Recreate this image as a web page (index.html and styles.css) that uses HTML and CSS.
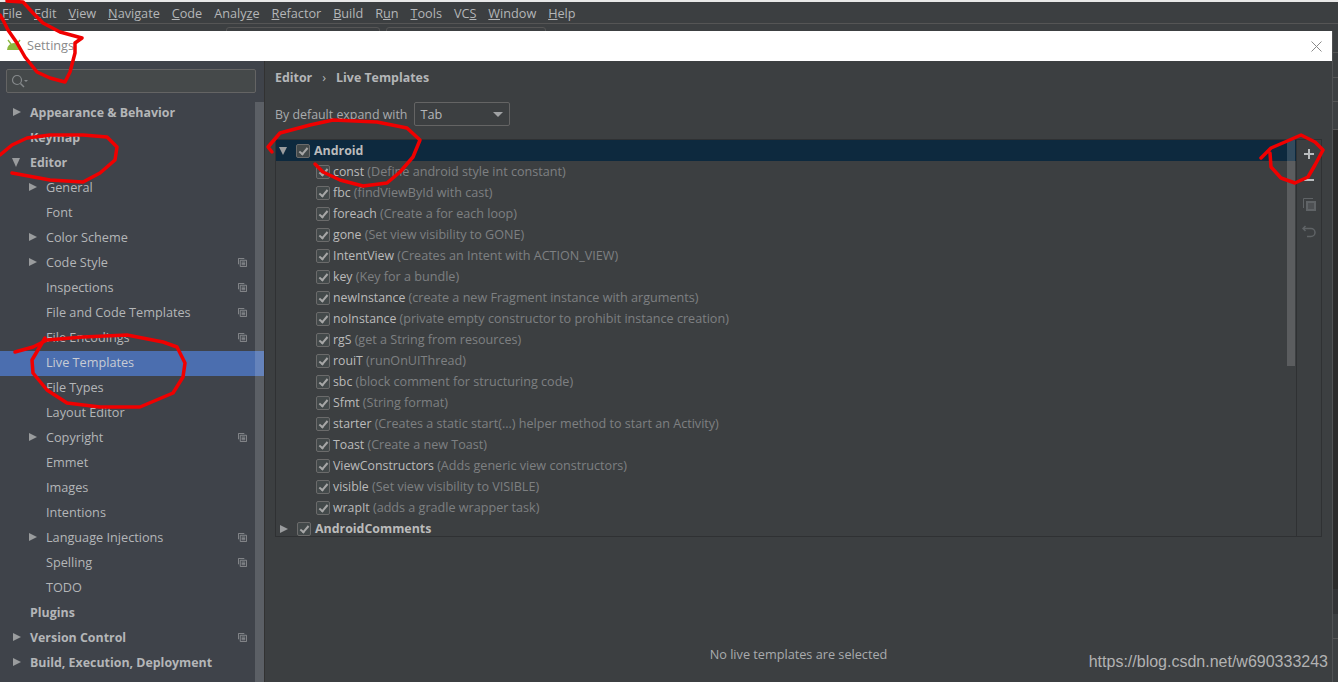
FILE: index.html
```html
<!DOCTYPE html>
<html lang="en">
<head>
    <meta charset="UTF-8">
    <title>Settings</title>
    <link rel="stylesheet" href="styles.css">
</head>
<body>

<svg width="0" height="0" class="defs">
    <symbol id="copy" viewBox="0 0 10 10">
        <path d="M.5 7V.5H7M2.500 2.500h7v7h-7zM4 4.500h4M4 6h4M4 7.500h4" fill="none" stroke="currentColor"/>
    </symbol>
</svg>

<div class="menubar">
    <span><u>F</u>ile</span>
    <span><u>E</u>dit</span>
    <span><u>V</u>iew</span>
    <span><u>N</u>avigate</span>
    <span><u>C</u>ode</span>
    <span>Analy<u>z</u>e</span>
    <span><u>R</u>efactor</span>
    <span><u>B</u>uild</span>
    <span>R<u>u</u>n</span>
    <span><u>T</u>ools</span>
    <span>VC<u>S</u></span>
    <span><u>W</u>indow</span>
    <span><u>H</u>elp</span>
</div>
<div class="toolbar">
    <div class="tool-box first"></div>
    <div class="tool-box second"></div>
</div>

<div class="main">
    <div class="dialog">
        <div class="titlebar">
            <svg class="droid" width="16" height="12" viewBox="0 0 16 12">
                <path d="M1 11a7 7 0 0 1 14 0z" fill="#8cb73f"/>
                <path d="M2 1l3 4M14 1l-3 4" stroke="#8cb73f" stroke-width="1.300"/>
            </svg>
            <span class="title">Settings</span>
            <svg class="close" width="11" height="11" viewBox="0 0 11 11">
                <path d="M.5.500l10 10M10.500.500l-10 10" stroke="#8a8a8a"/>
            </svg>
        </div>
        <div class="dialog-body">
            <div class="sidebar">
                <div class="search">
                    <svg width="18" height="14" viewBox="0 0 18 14">
                        <circle cx="6" cy="6" r="4.500" fill="none" stroke="#85898b" stroke-width="1.200"/>
                        <path d="M9.500 9.500l3.500 3.500" stroke="#85898b" stroke-width="1.400"/>
                        <path d="M13 6h4l-2 2z" fill="#85898b"/>
                    </svg>
                </div>
                <div class="tree">
                    <div class="nav bold arrow">Appearance &amp; Behavior</div>
                    <div class="nav bold">Keymap</div>
                    <div class="nav bold arrow open">Editor</div>
                    <div class="nav sub arrow">General</div>
                    <div class="nav sub">Font</div>
                    <div class="nav sub arrow">Color Scheme</div>
                    <div class="nav sub arrow">Code Style<svg class="mark"><use href="#copy"/></svg></div>
                    <div class="nav sub">Inspections<svg class="mark"><use href="#copy"/></svg></div>
                    <div class="nav sub">File and Code Templates<svg class="mark"><use href="#copy"/></svg></div>
                    <div class="nav sub">File Encodings<svg class="mark"><use href="#copy"/></svg></div>
                    <div class="nav sub active">Live Templates</div>
                    <div class="nav sub">File Types</div>
                    <div class="nav sub">Layout Editor</div>
                    <div class="nav sub arrow">Copyright<svg class="mark"><use href="#copy"/></svg></div>
                    <div class="nav sub">Emmet</div>
                    <div class="nav sub">Images</div>
                    <div class="nav sub">Intentions</div>
                    <div class="nav sub arrow">Language Injections<svg class="mark"><use href="#copy"/></svg></div>
                    <div class="nav sub">Spelling<svg class="mark"><use href="#copy"/></svg></div>
                    <div class="nav sub">TODO</div>
                    <div class="nav bold">Plugins</div>
                    <div class="nav bold arrow">Version Control<svg class="mark"><use href="#copy"/></svg></div>
                    <div class="nav bold arrow">Build, Execution, Deployment</div>
                </div>
                <div class="side-scroll"></div>
            </div>

            <div class="content">
                <div class="crumbs"><b>Editor</b><i>›</i><b>Live Templates</b></div>
                <div class="expand">
                    <span>By default expand with</span>
                    <div class="select">Tab<em></em></div>
                </div>
                <div class="panel">
                    <div class="list">
                        <div class="group selected"><em class="tri open"></em><span class="check"></span><b>Android</b></div>
                        <div class="row"><span class="check"></span>const <small>(Define android style int constant)</small></div>
                        <div class="row"><span class="check"></span>fbc <small>(findViewById with cast)</small></div>
                        <div class="row"><span class="check"></span>foreach <small>(Create a for each loop)</small></div>
                        <div class="row"><span class="check"></span>gone <small>(Set view visibility to GONE)</small></div>
                        <div class="row"><span class="check"></span>IntentView <small>(Creates an Intent with ACTION_VIEW)</small></div>
                        <div class="row"><span class="check"></span>key <small>(Key for a bundle)</small></div>
                        <div class="row"><span class="check"></span>newInstance <small>(create a new Fragment instance with arguments)</small></div>
                        <div class="row"><span class="check"></span>noInstance <small>(private empty constructor to prohibit instance creation)</small></div>
                        <div class="row"><span class="check"></span>rgS <small>(get a String from resources)</small></div>
                        <div class="row"><span class="check"></span>rouiT <small>(runOnUIThread)</small></div>
                        <div class="row"><span class="check"></span>sbc <small>(block comment for structuring code)</small></div>
                        <div class="row"><span class="check"></span>Sfmt <small>(String format)</small></div>
                        <div class="row"><span class="check"></span>starter <small>(Creates a static start(...) helper method to start an Activity)</small></div>
                        <div class="row"><span class="check"></span>Toast <small>(Create a new Toast)</small></div>
                        <div class="row"><span class="check"></span>ViewConstructors <small>(Adds generic view constructors)</small></div>
                        <div class="row"><span class="check"></span>visible <small>(Set view visibility to VISIBLE)</small></div>
                        <div class="row"><span class="check"></span>wrapIt <small>(adds a gradle wrapper task)</small></div>
                        <div class="group"><em class="tri"></em><span class="check"></span><b>AndroidComments</b></div>
                    </div>
                    <div class="list-scroll"></div>
                    <div class="actions">
                        <svg width="12" height="12" viewBox="0 0 12 12"><path d="M6 1v10M1 6h10" stroke="#b9bcbe" stroke-width="2"/></svg>
                        <svg width="12" height="12" viewBox="0 0 12 12"><path d="M1 6h10" stroke="#b9bcbe" stroke-width="2"/></svg>
                        <svg class="copy-btn" width="13" height="13" viewBox="0 0 13 13"><path d="M.5 10V.5H10" fill="none" stroke="#5f6366"/><path d="M3 3h10v10H3z" fill="#5f6366"/><path d="M5 6h6M5 8h6M5 10h6" stroke="#3c3f41"/></svg>
                        <svg width="14" height="13" viewBox="0 0 14 13"><path d="M3.500 1L1 3.500 3.500 6M1.500 3.500H9a4 4 0 0 1 0 8H5" fill="none" stroke="#5f6366" stroke-width="1.500"/></svg>
                    </div>
                </div>
                <div class="empty">No live templates are selected</div>
            </div>
        </div>
    </div>
    <div class="ide-edge">
        <div class="edge-line"></div>
        <div class="edge-line"></div>
        <div class="edge-line"></div>
        <div class="edge-line"></div>
        <div class="edge-dark"></div>
        <div class="edge-mid"></div>
        <div class="edge-line"></div>
        <div></div>
    </div>
</div>

<div class="watermark">https://blog.csdn.net/w690333243</div>

<svg class="scribbles" width="1338" height="682" viewBox="0 0 1338 682">
    <g fill="none" stroke="#f00000" stroke-width="3.500" stroke-linecap="round" stroke-linejoin="round">
        <path d="M7 1L23 2L33 13L43 23L60 32L82 38L75 43L75 53L70 72L65 82L50 78L37 72L25 57L17 43L8 30L3 20L0 15"/>
        <path d="M0 155L12 145L27 138L50 135L83 135L107 137L117 147L115 160L100 173L83 182L50 180L12 173"/>
        <path d="M272 152L268 147L280 133L310 125L333 120L377 122L407 128L420 140L413 157L400 172L387 183L363 186L340 180L323 172L315 164"/>
        <path d="M15 352L33 347L47 340L83 337L127 335L163 342L177 347L185 363L183 377L173 393L140 407L100 407L67 403L47 390L33 373L32 360L45 338"/>
        <path d="M1261 158L1271 148L1285 142L1301 135L1315 142L1323 150L1315 165L1308 177L1295 183L1281 178L1271 167L1270 153"/>
    </g>
</svg>

</body>
</html>
```

FILE: styles.css
```css
html, body {
    margin: 0;
    height: 682px;
    overflow: hidden;
}
body {
    font-family: 'Open Sans', sans-serif;
    font-size: 12.7px;
    background: #3c3f41;
    color: #bbbbbb;
    display: flex;
    flex-direction: column;
    position: relative;
}
b, .nav.bold {
    font-size: 12.4px;
    font-weight: 700;
}
.defs {
    position: absolute;
}
.menubar {
    height: 21px;
    display: flex;
    align-items: center;
    gap: 11.9px;
    padding-left: 2px;
    border-top: 2px solid #e8e8e8;
    border-bottom: 1px solid #555555;
    color: #b4b6b8;
}
.toolbar {
    height: 7px;
    display: flex;
    overflow: hidden;
}
.tool-box {
    height: 12px;
    border: 1px solid #555555;
    border-radius: 3px;
    margin-top: 3px;
    box-sizing: border-box;
}
.tool-box.first {
    width: 154px;
    margin-left: 226px;
}
.tool-box.second {
    width: 160px;
    margin-left: 6px;
}
.main {
    flex: 1;
    display: flex;
    min-height: 0;
}
.dialog {
    width: 1332px;
    display: flex;
    flex-direction: column;
}
.ide-edge {
    flex: 1;
    display: grid;
    grid-template-rows: 22px 25px 24px 28px 459px 25px 25px 1fr;
    border-left: 1px solid #505254;
}
.edge-line {
    border-bottom: 1px solid #555555;
}
.edge-dark {
    background: #2b2b2b;
}
.edge-mid {
    background: #323436;
}
.titlebar {
    height: 30px;
    flex: none;
    background: #ffffff;
    display: flex;
    align-items: center;
    padding: 0 10px 0 6px;
}
.droid {
    margin-top: -2px;
}
.title {
    margin-left: 5px;
    margin-top: -2px;
    color: #8a8a8a;
    flex: 1;
}
.dialog-body {
    flex: 1;
    display: flex;
    min-height: 0;
}

/* left tree */
.sidebar {
    width: 264px;
    flex: none;
    background: #3f434a;
    border-right: 1px solid #323232;
    position: relative;
}
.search {
    height: 22px;
    margin: 8px 8px 0 6px;
    border: 1px solid #646464;
    border-radius: 2px;
    background: #45494a;
    display: flex;
    align-items: center;
    padding-left: 4px;
}
.tree {
    margin-top: 8px;
}
.nav {
    height: 25px;
    box-sizing: border-box;
    padding: 0 0 2px 30px;
    color: #b4b6b8;
    display: flex;
    align-items: center;
    position: relative;
}
.nav.sub {
    padding: 0 0 4px 46px;
}
.nav.active {
    background: #4b6eaf;
    color: #c8ccd4;
}
.nav.arrow::before {
    content: "";
    position: absolute;
    left: 13px;
    top: 7px;
    border-left: 8px solid #9a9c9e;
    border-top: 4.500px solid transparent;
    border-bottom: 4.500px solid transparent;
}
.nav.sub.arrow::before {
    left: 29px;
}
.nav.open::before {
    left: 12px;
    top: 7px;
    border-top: 9px solid #9a9c9e;
    border-left: 4.500px solid transparent;
    border-right: 4.500px solid transparent;
    border-bottom: 0;
}
.mark {
    width: 9px;
    height: 9px;
    position: absolute;
    left: 238px;
    top: 7px;
    color: #8d9093;
}
.side-scroll {
    position: absolute;
    left: 255px;
    top: 41px;
    bottom: 0;
    width: 9px;
    background: rgba(255, 255, 255, 0.15);
}

/* right side */
.content {
    flex: 1;
    min-width: 0;
    padding: 0 10px;
    position: relative;
}
.crumbs {
    height: 32px;
    display: flex;
    align-items: center;
    color: #b4b6b8;
}
.crumbs i {
    font-style: normal;
    margin: 0 10px;
}
.expand {
    display: flex;
    align-items: center;
    gap: 7px;
    margin-top: 9px;
    color: #a9abad;
}
.expand span {
    font-size: 12.4px;
}
.select {
    width: 96px;
    height: 24px;
    line-height: 22px;
    box-sizing: border-box;
    border: 1px solid #646464;
    border-radius: 2px;
    padding-left: 5px;
    color: #b4b6b8;
    position: relative;
}
.select em {
    position: absolute;
    right: 6px;
    top: 9px;
    border-top: 5px solid #a0a2a4;
    border-left: 5px solid transparent;
    border-right: 5px solid transparent;
}
.panel {
    height: 398px;
    margin-top: 13px;
    box-sizing: border-box;
    border: 1px solid #2f3133;
    display: flex;
    position: relative;
    overflow: hidden;
}
.list {
    flex: 1;
    min-width: 0;
}
.group, .row {
    height: 21px;
    line-height: 16px;
    display: flex;
    align-items: center;
    white-space: pre;
    color: #bbbbbb;
}
.group {
    padding-left: 3px;
}
.group.selected {
    background: #0d293e;
}
.row {
    box-sizing: border-box;
    padding: 0 0 0 40px;
    font-size: 12.3px;
}
.row small {
    font-size: 12.6px;
    color: #7e8082;
}
.tri {
    width: 0;
    margin-left: 1px;
    margin-right: 9px;
    border-left: 8px solid #9a9c9e;
    border-top: 4.500px solid transparent;
    border-bottom: 4.500px solid transparent;
}
.tri.open {
    margin-left: 0;
    border-top: 8px solid #9a9c9e;
    border-left: 4.500px solid transparent;
    border-right: 4.500px solid transparent;
    border-bottom: 0;
}
.check {
    width: 12px;
    height: 12px;
    flex: none;
    border: 1px solid #6b6b6b;
    border-radius: 2px;
    background: #43494a;
    margin-right: 4px;
    position: relative;
}
.row .check {
    margin-right: 3px;
}
.check::after {
    content: "";
    position: absolute;
    left: 4px;
    top: 1px;
    width: 3px;
    height: 7px;
    border: solid #a7a7a7;
    border-width: 0 2px 2px 0;
    transform: rotate(40deg);
}
.list-scroll {
    position: absolute;
    right: 26px;
    top: 0;
    width: 8px;
    height: 226px;
    background: rgba(255, 255, 255, 0.16);
}
.actions {
    width: 25px;
    flex: none;
    border-left: 1px solid #2f3133;
    display: flex;
    flex-direction: column;
    align-items: center;
    gap: 14px;
    padding-top: 8px;
    box-sizing: border-box;
}
.copy-btn {
    margin-top: -2px;
}
.empty {
    text-align: center;
    margin-top: 108px;
    color: #a9abad;
}
.watermark {
    position: absolute;
    right: 10px;
    top: 653px;
    font-family: 'Liberation Sans', sans-serif;
    font-size: 16px;
    color: #b2b2b2;
}
.scribbles {
    position: absolute;
    left: 0;
    top: 0;
}
```
